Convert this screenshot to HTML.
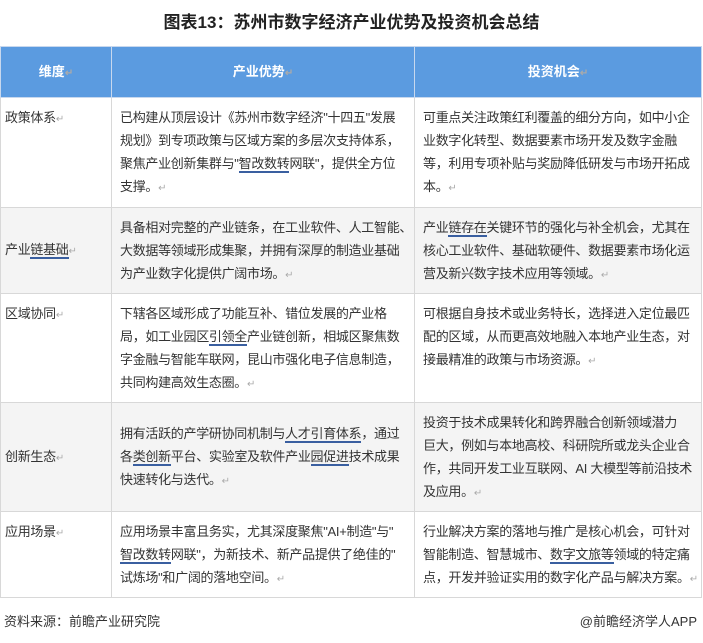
<!DOCTYPE html>
<html><head><meta charset="utf-8"><style>
body{margin:0;width:703px;height:643px;background:#fff;font-family:"Liberation Sans","Noto Sans CJK SC",sans-serif;color:#333;position:relative;overflow:hidden}
.t{position:absolute;top:8px;left:0;width:703px;text-align:center;font-size:17px;font-weight:bold;color:#222}
table{position:absolute;left:0;top:46px;border-collapse:collapse;width:701px;table-layout:fixed}
td,th{border:1px solid #d8d8d8;font-size:13px;line-height:23px;vertical-align:top;padding:8px 0 0 8px;letter-spacing:-0.3px;overflow:hidden;white-space:nowrap}
th{background:#5b9be0;color:#fff;height:50px;padding:0;vertical-align:middle;font-size:13px;border-color:#c8d8ee;letter-spacing:0}
tr.g td{background:#f4f4f4}
td.c1{padding-left:4px}
td.m{vertical-align:middle;padding-top:0}
u{text-decoration:none;border-bottom:2px double #3a5fa0}
.r{color:#aaa;font-size:10px}
.f1{position:absolute;left:4px;top:611px;font-size:13px}
.f2{position:absolute;right:6px;top:611px;font-size:13px}
</style></head><body>
<div class="t">图表13：苏州市数字经济产业优势及投资机会总结</div>
<table>
<colgroup><col style="width:111px"><col style="width:303px"><col style="width:287px"></colgroup>
<tr><th>维度<span class="r">↵</span></th><th>产业优势<span class="r">↵</span></th><th>投资机会<span class="r">↵</span></th></tr>
<tr style="height:110px"><td class="c1">政策体系<span class="r">↵</span></td><td>已构建从顶层设计《苏州市数字经济"十四五"发展<br>规划》到专项政策与区域方案的多层次支持体系，<br>聚焦产业创新集群与"<u>智改数转</u>网联"，提供全方位<br>支撑。<span class="r">↵</span></td><td>可重点关注政策红利覆盖的细分方向，如中小企<br>业数字化转型、数据要素市场开发及数字金融<br>等，利用专项补贴与奖励降低研发与市场开拓成<br>本。<span class="r">↵</span></td></tr>
<tr class="g" style="height:86px"><td class="c1 m">产业<u>链基础</u><span class="r">↵</span></td><td>具备相对完整的产业链条，在工业软件、人工智能、<br>大数据等领域形成集聚，并拥有深厚的制造业基础<br>为产业数字化提供广阔市场。<span class="r">↵</span></td><td>产业<u>链存在</u>关键环节的强化与补全机会，尤其在<br>核心工业软件、基础软硬件、数据要素市场化运<br>营及新兴数字技术应用等领域。<span class="r">↵</span></td></tr>
<tr style="height:109px"><td class="c1">区域协同<span class="r">↵</span></td><td>下辖各区域形成了功能互补、错位发展的产业格<br>局，如工业园区<u>引领全</u>产业链创新，相城区聚焦数<br>字金融与智能车联网，昆山市强化电子信息制造，<br>共同构建高效生态圈。<span class="r">↵</span></td><td>可根据自身技术或业务特长，选择进入定位最匹<br>配的区域，从而更高效地融入本地产业生态，对<br>接最精准的政策与市场资源。<span class="r">↵</span></td></tr>
<tr class="g" style="height:109px"><td class="c1 m">创新生态<span class="r">↵</span></td><td class="m">拥有活跃的产学研协同机制与<u>人才引育体系</u>，通过<br>各<u>类创新</u>平台、实验室及软件产业<u>园促进</u>技术成果<br>快速转化与迭代。<span class="r">↵</span></td><td>投资于技术成果转化和跨界融合创新领域潜力<br>巨大，例如与本地高校、科研院所或龙头企业合<br>作，共同开发工业互联网、AI 大模型等前沿技术<br>及应用。<span class="r">↵</span></td></tr>
<tr style="height:86px"><td class="c1">应用场景<span class="r">↵</span></td><td>应用场景丰富且务实，尤其深度聚焦"AI+制造"与"<br><u>智改数转</u>网联"，为新技术、新产品提供了绝佳的"<br>试炼场"和广阔的落地空间。<span class="r">↵</span></td><td>行业解决方案的落地与推广是核心机会，可针对<br>智能制造、智慧城市、<u>数字文旅等</u>领域的特定痛<br>点，开发并验证实用的数字化产品与解决方案。<span class="r">↵</span></td></tr>
</table>
<div class="f1">资料来源：前瞻产业研究院</div>
<div class="f2">@前瞻经济学人APP</div>
</body></html>
